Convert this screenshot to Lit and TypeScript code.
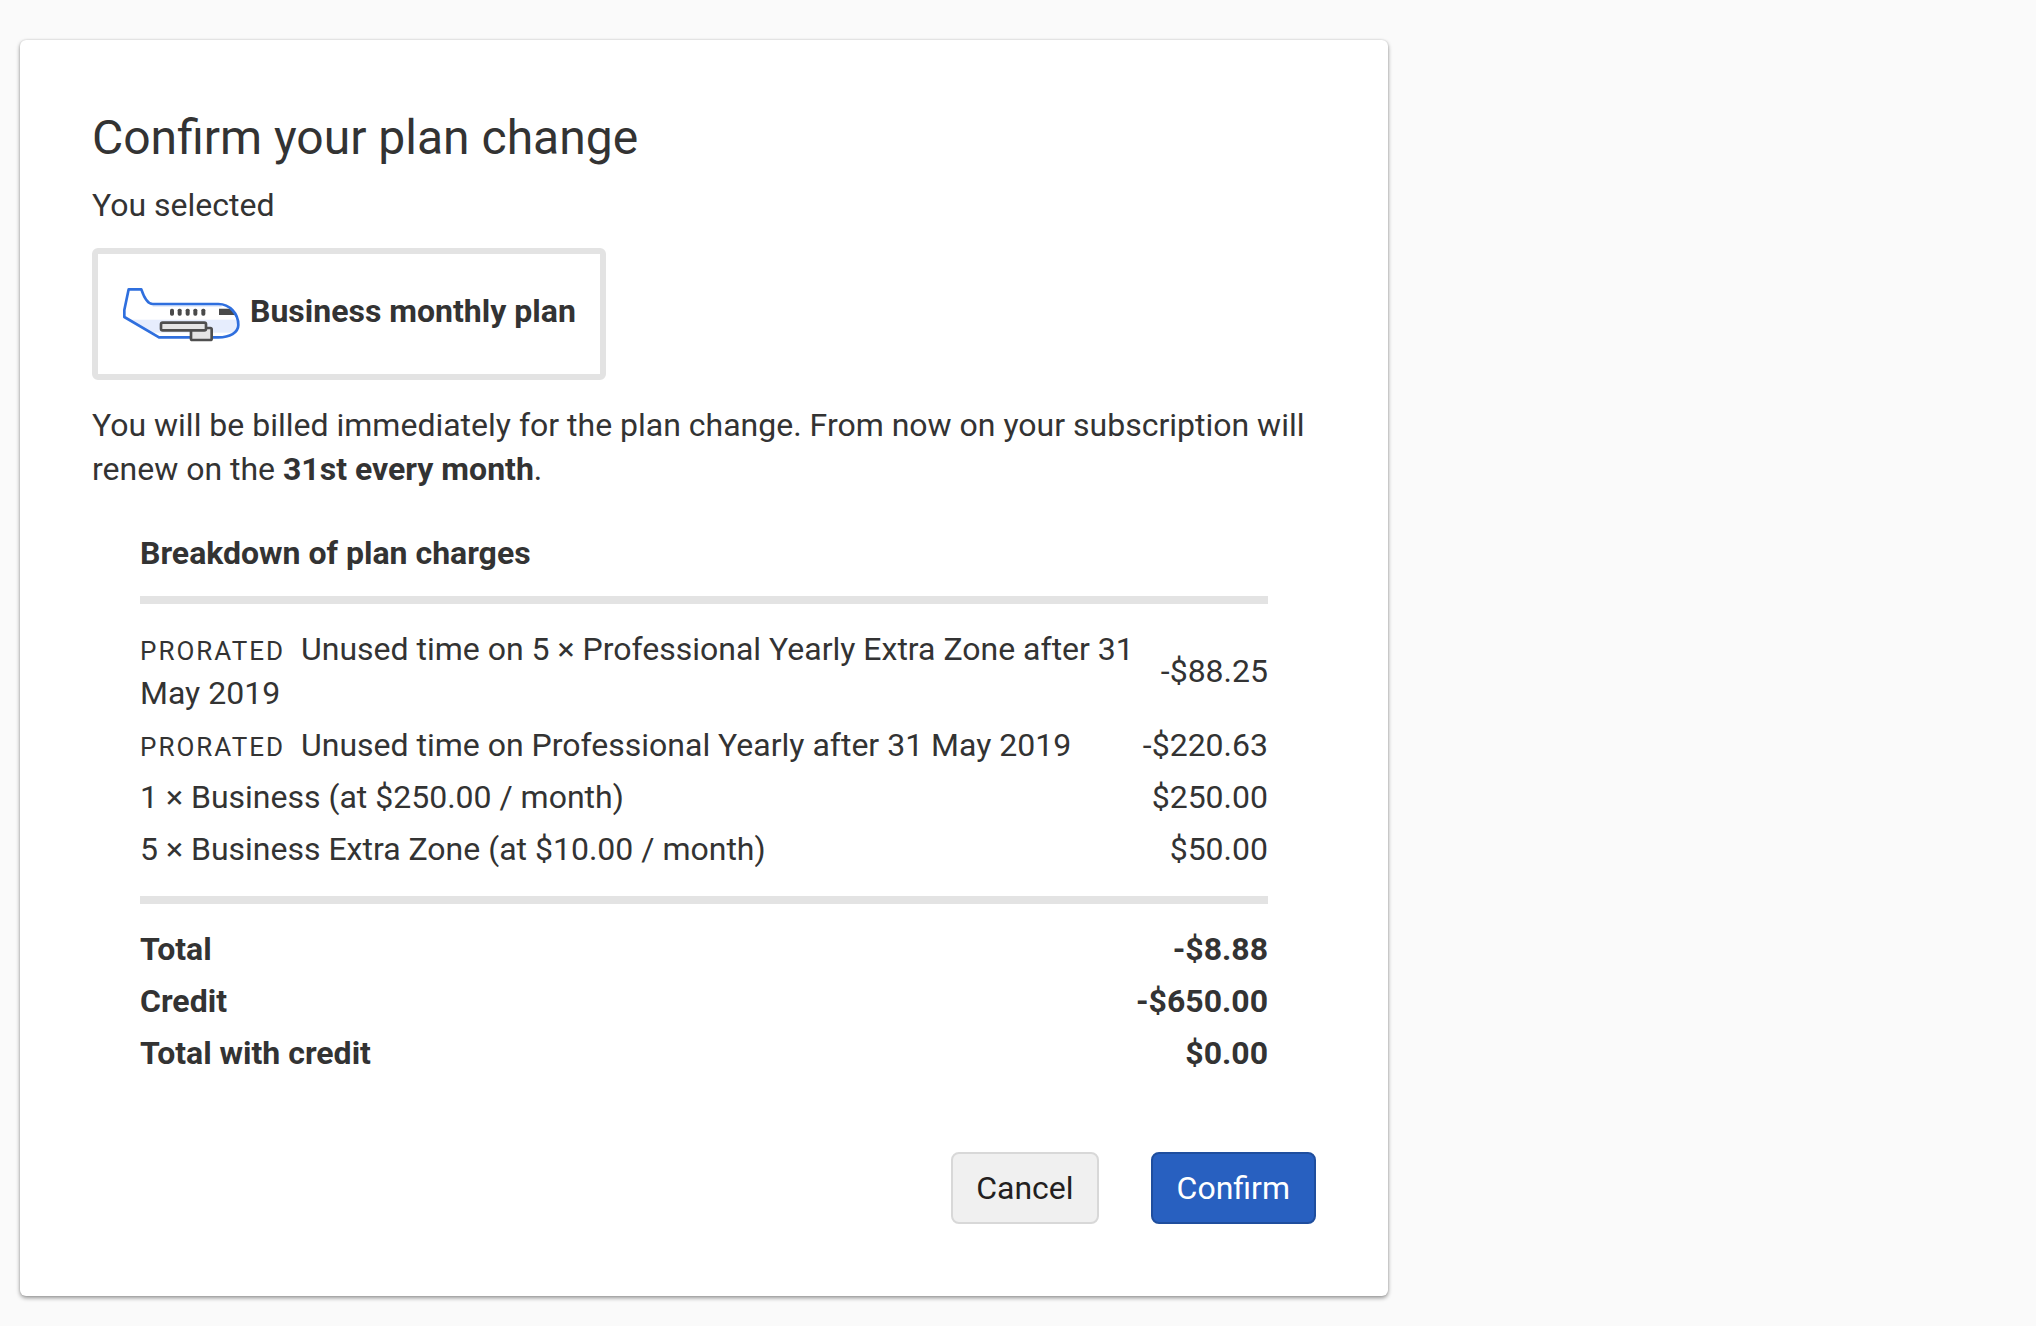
import { LitElement, html, svg, css } from "lit";
import { customElement } from "lit/decorators.js";

interface Charge {
  label: string;
  amount: string;
  prorated?: boolean;
}

const charges: Charge[] = [
  { label: "Unused time on 5 × Professional Yearly Extra Zone after 31 May 2019", amount: "-$88.25", prorated: true },
  { label: "Unused time on Professional Yearly after 31 May 2019", amount: "-$220.63", prorated: true },
  { label: "1 × Business (at $250.00 / month)", amount: "$250.00" },
  { label: "5 × Business Extra Zone (at $10.00 / month)", amount: "$50.00" },
];

const totals: Charge[] = [
  { label: "Total", amount: "-$8.88" },
  { label: "Credit", amount: "-$650.00" },
  { label: "Total with credit", amount: "$0.00" },
];

const hull =
  "M56 43H94C101 64 111 87 128 87H325C359 87 385 116 385 150C385 173 359 187 325 187H147L43 126V105Z";

@customElement("app-root")
export class AppRoot extends LitElement {
  static styles = css`
    :host {
      display: block;
      box-sizing: border-box;
      min-height: 100vh;
      padding: 40px 20px 28px;
      background: #fafafa;
      color: #333;
      font: 32px/44px Roboto, "Liberation Sans", sans-serif;
    }
    * { box-sizing: border-box; }
    .card {
      max-width: 1368px;
      padding: 72px;
      background: #fff;
      border-radius: 6px;
      box-shadow: 0 2px 4px rgba(0, 0, 0, 0.4), 0 0 2px rgba(0, 0, 0, 0.15);
    }
    h1 { margin: 0; font-size: 48px; line-height: 52px; font-weight: 400; }
    p { margin: 0; }
    .selected { margin-top: 19px; }
    .plan {
      display: flex;
      align-items: center;
      gap: 8px;
      width: fit-content;
      min-height: 132px;
      margin: 21px 0 23px;
      padding: 0 24px 6px;
      border: 6px solid #e3e3e3;
      border-radius: 6px;
      font-weight: 700;
    }
    .plane { display: block; width: 120px; height: 64px; }
    .breakdown { padding: 40px 48px 0; }
    table { width: 100%; border-collapse: collapse; }
    caption { padding-bottom: 21px; text-align: left; font-weight: 700; }
    td { padding: 4px 0; }
    td:first-child { width: 100%; }
    td:last-child { text-align: right; white-space: nowrap; }
    tbody { border-top: 8px solid #e3e3e3; }
    tbody tr:first-child td { padding-top: 23px; }
    tbody tr:last-child td { padding-bottom: 25px; }
    .totals { font-weight: 700; }
    .prorated {
      margin-right: 8px;
      font-size: 26px;
      line-height: 32px;
      letter-spacing: 2px;
      text-transform: uppercase;
    }
    .actions { display: flex; justify-content: flex-end; gap: 52px; margin-top: 52px; }
    button {
      height: 72px;
      padding: 0 23px;
      border: 2px solid #d8d8d8;
      border-radius: 8px;
      background: #f0f0f0;
      color: #231f20;
      font: inherit;
    }
    .primary { padding: 0 24px; border-color: #1f4e9e; background: #2860c0; color: #fff; }
  `;

  private row(c: Charge) {
    return html`<tr>
      <td>${c.prorated ? html`<span class="prorated">Prorated</span> ` : ""}${c.label}</td>
      <td>${c.amount}</td>
    </tr>`;
  }

  private plane() {
    return html`<svg class="plane" viewBox="36 12 360 192" aria-hidden="true">
      <defs><clipPath id="hull"><path d=${hull} /></clipPath></defs>
      <g clip-path="url(#hull)">
        <rect x="36" y="134" width="360" height="39" fill="#e6edfd" />
        <path d="M128 93H335" stroke="#dbe6fb" stroke-width="4" />
        <path d="M327 101H390V120H327Z" fill="#4a4a4a" />
      </g>
      <path d=${hull} fill="none" stroke="#2f6fde" stroke-width="8" stroke-linejoin="round" />
      <g fill="#4a4a4a">
        ${[180, 203, 227, 250, 274].map(
          (x) => svg`<rect x=${x} y="101" width="12" height="21" rx="5" />`
        )}
      </g>
      <g fill="#e5e5e5" stroke="#4f4f4f" stroke-width="8">
        <rect x="243" y="159" width="62" height="36" rx="4" />
        <rect x="153" y="143" width="135" height="23" rx="5" />
      </g>
    </svg>`;
  }

  render() {
    return html`
      <main class="card">
        <h1>Confirm your plan change</h1>
        <p class="selected">You selected</p>
        <div class="plan">
          ${this.plane()}
          <span>Business monthly plan</span>
        </div>
        <p>You will be billed immediately for the plan change. From now on your subscription will renew on the <strong>31st every month</strong>.</p>
        <section class="breakdown">
          <table>
            <caption>Breakdown of plan charges</caption>
            <tbody>${charges.map((c) => this.row(c))}</tbody>
            <tbody class="totals">${totals.map((c) => this.row(c))}</tbody>
          </table>
        </section>
        <div class="actions">
          <button type="button">Cancel</button>
          <button type="button" class="primary">Confirm</button>
        </div>
      </main>
    `;
  }
}
